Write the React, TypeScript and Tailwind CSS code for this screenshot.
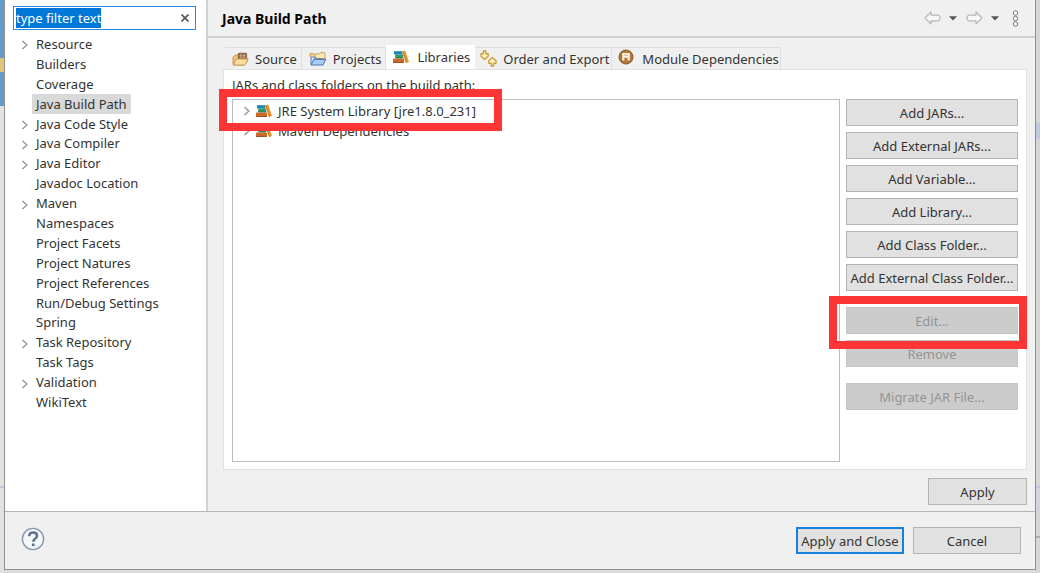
import { useEffect, useRef, useState } from "react";
import type { ReactNode } from "react";

type TreeNode = { label: string; expandable?: boolean };

const nodes: TreeNode[] = [
  { label: "Resource", expandable: true },
  { label: "Builders" },
  { label: "Coverage" },
  { label: "Java Build Path" },
  { label: "Java Code Style", expandable: true },
  { label: "Java Compiler", expandable: true },
  { label: "Java Editor", expandable: true },
  { label: "Javadoc Location" },
  { label: "Maven", expandable: true },
  { label: "Namespaces" },
  { label: "Project Facets" },
  { label: "Project Natures" },
  { label: "Project References" },
  { label: "Run/Debug Settings" },
  { label: "Spring" },
  { label: "Task Repository", expandable: true },
  { label: "Task Tags" },
  { label: "Validation", expandable: true },
  { label: "WikiText" },
];

function Chevron() {
  return (
    <svg viewBox="0 0 8 10" className="h-[10px] w-2 shrink-0" fill="none" stroke="#9a9a9a" strokeWidth="1.5" aria-hidden="true">
      <path d="M1.5 1 5.8 5 1.5 9" />
    </svg>
  );
}

function BooksIcon() {
  return (
    <svg viewBox="0 0 16 14" className="h-[14px] w-4 shrink-0" aria-hidden="true">
      <path d="M1 1.2h8.4v3.3H1z" fill="#1f86b0" />
      <path d="M2.2 4.5h8v3.6h-8z" fill="#2f9a62" />
      <path d="M2.2 7.6h8v.9h-8z" fill="#1f7a5c" />
      <path d="M0 8.6h11v3.6H0z" fill="#cf6a2b" />
      <path d="M0 11.9h11v1.1H0z" fill="#a4561f" />
      <path d="M9.4 1.5 12.2.6 16 12l-3 1z" fill="#e9982f" />
      <path d="M9.4 1.5l1-.3 3.7 11.5-1.1.3z" fill="#cf7a22" />
    </svg>
  );
}

function SourceIcon() {
  return (
    <svg viewBox="0 0 17 14" className="h-[14px] w-[17px] shrink-0" aria-hidden="true">
      <path d="M1 12.5V5.2L3.5 3H6v3h9v4l-3 3H1.6z" fill="#edc680" stroke="#c58f42" strokeWidth=".9" />
      <path d="M6 1.6 7.5.8h6l1.6.9v5H6z" fill="#7b4f2e" />
      <path d="M6.5 3.2h8.2M6.5 5.1h8.2M9 1v5.6M12 1v5.6" stroke="#e6cba6" strokeWidth=".7" />
      <path d="M1.4 13 4 7h12.2l-3.4 6z" fill="#fbdf9c" stroke="#c9954a" strokeWidth=".9" />
    </svg>
  );
}

function ProjectsIcon() {
  return (
    <svg viewBox="0 0 18 14" className="h-[14px] w-[18px] shrink-0" aria-hidden="true">
      <path d="M1 5V1.6h3.5l1 1.2H8" fill="#f3d388" stroke="#c99f4c" />
      <path d="M6 6V2h4l1.2-1.3h4L16 2v5z" fill="#fbe9b7" stroke="#cba04d" />
      <path d="M2 12.5V5h4v2h9" fill="#dce9fb" stroke="#5679b8" />
      <path d="M2 13 4.8 7.4h12L14 13z" fill="#a9cdf8" stroke="#4a70b4" />
    </svg>
  );
}

function OrderIcon() {
  return (
    <svg viewBox="0 0 17 17" className="h-[17px] w-[17px] shrink-0" fill="#fdf2c4" stroke="#c9a136" strokeWidth="1.4" strokeLinejoin="round" aria-hidden="true">
      <path d="M3.4 1h2.4v2.8h2.4v2.4L4.6 9.6 1 6.2V3.8h2.4z" />
      <path d="M11.2 16h2.4v-2.8H16v-2.4l-3.6-3.4-3.6 3.4v2.4h2.4z" />
    </svg>
  );
}

function ModuleIcon() {
  return (
    <svg viewBox="0 0 16 16" className="mb-1 h-4 w-4 shrink-0" aria-hidden="true">
      <circle cx="8" cy="8" r="7" fill="#b0763a" stroke="#8c5722" />
      <path d="M4.2 4h7.6v7.6H9.6V8.8H6.4v2.8H4.2z" fill="#fff4e2" />
      <path d="M6.6 5.4h.9v1.4h-.9zM8.5 5.4h.9v1.4h-.9z" fill="#b0763a" />
    </svg>
  );
}

function ArrowIcon({ flip = false }: { flip?: boolean }) {
  return (
    <svg viewBox="0 0 17 14" className={flip ? "h-[14px] w-[17px] -scale-x-100" : "h-[14px] w-[17px]"} fill="#f8f8f8" stroke="#b8b8b8" strokeWidth="1.2" strokeLinejoin="round" aria-hidden="true">
      <path d="M1 7 7 1v3.2h7.4l1.4 1.2v3.2l-1.4 1.2H7V13z" />
    </svg>
  );
}

function Caret() {
  return (
    <svg viewBox="0 0 8 5" className="h-[5px] w-2" aria-hidden="true">
      <path d="M0 .3h8L4 4.6z" fill="#555" />
    </svg>
  );
}

function Highlight({ className }: { className: string }) {
  return <span aria-hidden="true" className={`pointer-events-none absolute z-10 border-8 border-[#fd3535] ${className}`} />;
}

const tabs: { label: string; icon: ReactNode; pad: string }[] = [
  { label: "Source", icon: <SourceIcon />, pad: "pl-[7px] pr-1 gap-[6px]" },
  { label: "Projects", icon: <ProjectsIcon />, pad: "pl-[7px] pr-1 gap-[6px]" },
  { label: "Libraries", icon: <BooksIcon />, pad: "pl-[7px] pr-[5px] gap-2" },
  { label: "Order and Export", icon: <OrderIcon />, pad: "pl-[5px] pr-[2px] gap-[6px]" },
  { label: "Module Dependencies", icon: <ModuleIcon />, pad: "pl-[6px] pr-px gap-2" },
];

function PushButton({ children, disabled = false, className = "" }: { children: ReactNode; disabled?: boolean; className?: string }) {
  return (
    <button
      type="button"
      disabled={disabled}
      className={`h-[27px] border text-center whitespace-nowrap ${
        disabled ? "border-[#c4c4c4] bg-[#cccccc] text-[#949494]" : "border-[#b4b4b4] bg-[#e1e1e1] text-[#333]"
      } ${className}`}
    >
      {children}
    </button>
  );
}

export default function App() {
  const filter = useRef<HTMLInputElement>(null);
  const [tab, setTab] = useState("Libraries");
  const [page, setPage] = useState("Java Build Path");

  useEffect(() => {
    filter.current?.focus();
    filter.current?.select();
  }, []);

  return (
    <div className="flex min-h-screen bg-[#dcdcdc] font-['Noto_Sans','Noto_Sans_CJK_KR',sans-serif] text-[13px] leading-5 text-[#333]">
      <div className="flex w-1 shrink-0 flex-col bg-[#e2e2e2]">
        <div className="h-[106px] bg-[#629ccb] pt-[58px]">
          <div className="h-[14px] bg-[#e3c47c]" />
        </div>
        <div className="mt-[380px] h-[2px] bg-[#c5c9e0]" />
      </div>

      <main className="mb-[3px] flex min-w-0 flex-1 flex-col border-x border-b border-[#8f8f8f] bg-[#f0f0f0]">
        <div className="flex flex-1">
          <aside className="w-[203px] shrink-0 border-r-2 border-[#d2d2d2] bg-white pt-[6px]">
            <div className="mr-[10px] ml-2 flex h-6 items-center border border-[#2b8ae0] pr-1 pl-[2px]">
              <input
                ref={filter}
                aria-label="Filter pages"
                defaultValue="type filter text"
                className="h-5 min-w-0 flex-1 bg-transparent caret-transparent outline-none selection:bg-[#0078d7] selection:text-white"
              />
              <button type="button" aria-label="Clear filter" className="flex h-4 w-3 items-center justify-center">
                <svg viewBox="0 0 8 8" className="h-2 w-2" stroke="#555" strokeWidth="1.6" aria-hidden="true">
                  <path d="m.5.5 7 7m0-7-7 7" />
                </svg>
              </button>
            </div>
            <ul className="mt-1 flex h-[378px] flex-col">
              {nodes.map((node) => (
                <li key={node.label} className="flex min-h-0 flex-1 items-center pl-4">
                  <span className="flex w-[11px] shrink-0 pt-[3px]">{node.expandable && <Chevron />}</span>
                  <button
                    type="button"
                    onClick={() => setPage(node.label)}
                    className={node.label === page ? "bg-[#d9d9d9] px-1" : "px-1"}
                  >
                    {node.label}
                  </button>
                </li>
              ))}
            </ul>
          </aside>

          <section className="flex min-w-0 flex-1 flex-col">
            <header className="flex h-[38px] items-center justify-between border-b-2 border-[#d0d0d0] pr-4 pl-[14px]">
              <h1 className="pt-[2px] text-sm font-bold text-black">Java Build Path</h1>
              <div className="flex items-center">
                <button type="button" aria-label="Back"><ArrowIcon /></button>
                <button type="button" aria-label="Back history" className="ml-2"><Caret /></button>
                <button type="button" aria-label="Forward" className="ml-[9px]"><ArrowIcon flip /></button>
                <button type="button" aria-label="Forward history" className="ml-2"><Caret /></button>
                <button type="button" aria-label="View menu" className="ml-[13px]">
                  <svg viewBox="0 0 7 17" className="h-[17px] w-[7px]" fill="#fff" stroke="#777" aria-hidden="true">
                    <circle cx="3.5" cy="3" r="2.2" />
                    <circle cx="3.5" cy="8.5" r="2.2" />
                    <circle cx="3.5" cy="14" r="2.2" />
                  </svg>
                </button>
              </div>
            </header>

            <div className="flex flex-1 flex-col pt-[7px] pr-2 pl-[15px]">
              <div role="tablist" className="flex h-6 items-end pl-[2px]">
                {tabs.map((t) => (
                  <button
                    key={t.label}
                    type="button"
                    role="tab"
                    aria-selected={t.label === tab}
                    onClick={() => setTab(t.label)}
                    className={`flex items-center whitespace-nowrap ${t.pad} ${
                      t.label === tab ? "h-6 bg-white" : "h-[22px] border-t border-r border-[#dfdfdf] bg-[#f0f0f0]"
                    }`}
                  >
                    {t.icon}
                    {t.label}
                  </button>
                ))}
              </div>

              <div className="flex flex-1 flex-col border border-[#e2e2e2] bg-white px-2 pb-[7px]">
                <p className="mt-[5px] h-6">JARs and class folders on the build path:</p>
                <div className="flex flex-1 gap-[6px]">
                  <ul className="min-w-0 flex-1 border border-[#b9bcc0] bg-white pt-px">
                    <li className="relative flex h-5 items-center pl-[10px]">
                      <Chevron />
                      <span className="ml-[5px] flex"><BooksIcon /></span>
                      <span className="ml-[6px]">JRE System Library [jre1.8.0_231]</span>
                      <Highlight className="-top-3 left-[-14px] h-[42px] w-[283px]" />
                    </li>
                    <li className="flex h-5 items-center pl-[10px]">
                      <Chevron />
                      <span className="ml-[5px] flex"><BooksIcon /></span>
                      <span className="ml-[6px]">Maven Dependencies</span>
                    </li>
                  </ul>
                  <div className="flex w-[172px] shrink-0 flex-col gap-[6px]">
                    <PushButton>Add JARs...</PushButton>
                    <PushButton>Add External JARs...</PushButton>
                    <PushButton>Add Variable...</PushButton>
                    <PushButton>Add Library...</PushButton>
                    <PushButton>Add Class Folder...</PushButton>
                    <PushButton>Add External Class Folder...</PushButton>
                    <div className="relative mt-[10px] flex flex-col">
                      <PushButton disabled>Edit...</PushButton>
                      <Highlight className="-top-[11px] -right-[9px] -bottom-[15px] -left-[17px]" />
                    </div>
                    <PushButton disabled>Remove</PushButton>
                    <PushButton disabled className="mt-[10px]">Migrate JAR File...</PushButton>
                  </div>
                </div>
              </div>

              <div className="flex justify-end pt-2 pb-[6px]">
                <PushButton className="w-[99px]">Apply</PushButton>
              </div>
            </div>
          </section>
        </div>

        <footer className="flex h-[58px] items-center justify-between border-t border-[#b5b5b5] pr-[14px] pl-4">
          <button type="button" aria-label="Help">
            <svg viewBox="0 0 24 24" className="mb-1 h-6 w-6" fill="none" aria-hidden="true">
              <circle cx="12" cy="12" r="10.6" fill="#f5f6f8" stroke="#8a97ab" strokeWidth="1.4" />
              <path d="M8.2 9.2c0-2.4 1.6-3.7 3.9-3.7 2.2 0 3.9 1.2 3.9 3.2 0 2.8-3.7 3-3.7 6" stroke="#5c7091" strokeWidth="2.5" />
              <circle cx="12.2" cy="17.8" r="1.5" fill="#5c7091" />
            </svg>
          </button>
          <div className="flex gap-[9px]">
            <PushButton className="w-[108px] outline-2 -outline-offset-2 outline-[#1680dc]">Apply and Close</PushButton>
            <PushButton className="w-[108px]">Cancel</PushButton>
          </div>
        </footer>
      </main>

      <div className="w-1 shrink-0 bg-[#d6d6d6] pt-[123px]">
        <div className="h-4 bg-[#bccadc]" />
        <div className="mt-[347px] h-[2px] bg-[#c0c3dc]" />
        <div className="h-7 bg-[#d3d3de]" />
        <div className="mt-5 h-[2px] bg-[#adadad]" />
      </div>
    </div>
  );
}
